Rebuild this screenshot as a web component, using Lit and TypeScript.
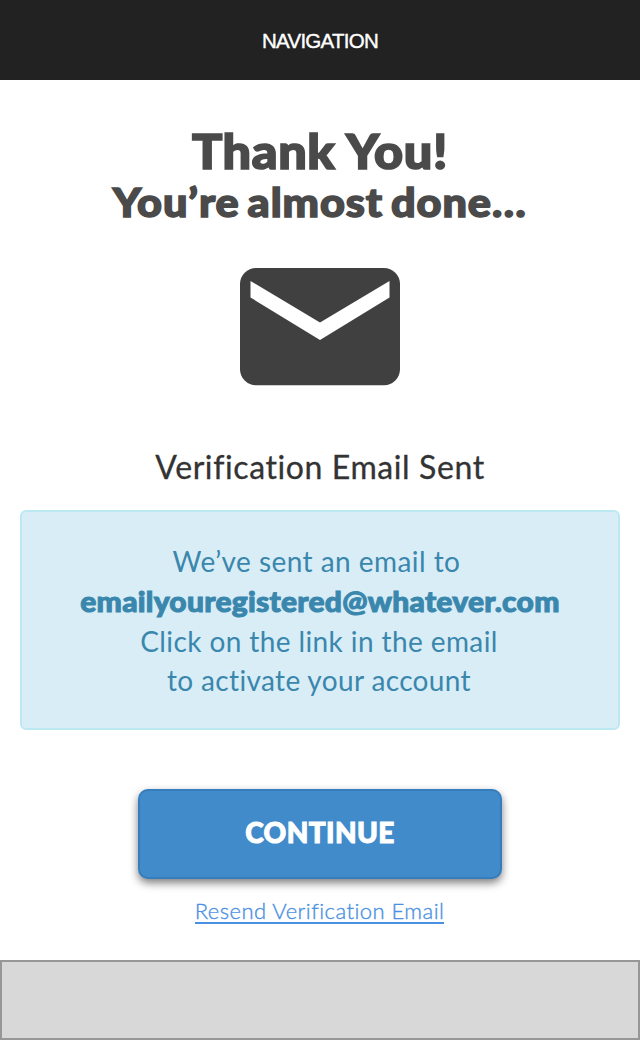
import { LitElement, html, css } from "lit";
import { customElement } from "lit/decorators.js";

@customElement("app-root")
export class AppRoot extends LitElement {
  static styles = css`
    :host {
      display: flex;
      flex-direction: column;
      align-items: center;
      height: 1040px;
      background: #fff;
      font-family: Lato, "Open Sans", sans-serif;
      font-variant-ligatures: none;
      white-space: nowrap;
    }
    .nav {
      box-sizing: border-box;
      align-self: stretch;
      height: 80px;
      background: #222;
      color: #fff;
      text-align: center;
      font: 20.5px/82px "Liberation Sans", Arial, sans-serif;
      letter-spacing: -0.75px;
      -webkit-text-stroke: 0.4px;
    }
    h1, h2, p { margin: 0; font-weight: inherit; }
    .title {
      margin-top: 42px;
      font-size: 48px;
      line-height: 57px;
      font-weight: 900;
      letter-spacing: 0.6px;
      -webkit-text-stroke: 1.7px;
      transform: scaleX(1.05);
      color: #4a4a4a;
    }
    .subtitle {
      font-size: 40px;
      line-height: 46px;
      font-weight: 900;
      letter-spacing: 0.85px;
      word-spacing: -3px;
      -webkit-text-stroke: 1.5px;
      transform: scaleX(1.08);
      color: #4a4a4a;
    }
    .envelope {
      display: block;
      margin-top: 43px;
      width: 160px;
      height: 118px;
    }
    .heading {
      margin-top: 61px;
      font-size: 32px;
      line-height: 40px;
      letter-spacing: 0.6px;
      -webkit-text-stroke: 0.3px;
      color: #333;
    }
    .notice {
      box-sizing: border-box;
      width: 600px;
      height: 220px;
      margin-top: 23px;
      padding-top: 29px;
      border: 2px solid #bce8f1;
      border-radius: 6px;
      background: #d9edf7;
      color: #3a87ad;
      text-align: center;
      font-size: 28px;
      line-height: 40px;
    }
    .sent { padding-right: 7px; letter-spacing: 0.45px; }
    .address {
      font-weight: 900;
      letter-spacing: 0.25px;
      -webkit-text-stroke: 1px;
      transform: scaleX(1.07);
    }
    .click { padding-right: 2px; letter-spacing: 0.4px; }
    .last { line-height: 38px; padding-right: 2px; letter-spacing: 0.35px; }
    .continue {
      box-sizing: border-box;
      width: 364px;
      height: 90px;
      margin: 59px 0 0;
      padding: 0 0 4px;
      border: 2px solid #357ebd;
      border-radius: 10px;
      background: #428bca;
      box-shadow: 0 4px 8px rgba(0, 0, 0, 0.5);
      color: #fff;
      font: 900 28px/80px Lato, "Open Sans", sans-serif;
      letter-spacing: 0.4px;
      -webkit-text-stroke: 1px;
    }
    .resend {
      margin-top: 20px;
      margin-right: 1px;
      border-bottom: 2px solid #4a90e2;
      color: #4a90e2;
      font-size: 22px;
      line-height: 23px;
      font-weight: 300;
      letter-spacing: 0.47px;
      -webkit-text-stroke: 0.35px;
      text-decoration: none;
    }
    .footer {
      box-sizing: border-box;
      align-self: stretch;
      height: 80px;
      margin-top: auto;
      border: 2px solid #979797;
      background: #d8d8d8;
    }
  `;

  render() {
    return html`
      <header class="nav"><span>NAVIGATION</span></header>
      <h1 class="title">Thank You!</h1>
      <p class="subtitle">You’re almost done…</p>
      <svg class="envelope" viewBox="0 0 160 118" aria-hidden="true">
        <rect width="160" height="117.3" rx="16" fill="#404040" />
        <path d="M10.5 13 80 54.5 149.5 13V29.5L80 72 10.5 29.5Z" fill="#fff" />
      </svg>
      <h2 class="heading">Verification Email Sent</h2>
      <section class="notice">
        <p class="sent"><span>We’ve sent an email to</span></p>
        <p class="address"><span>emailyouregistered@whatever.com</span></p>
        <p class="click"><span>Click on the link in the email</span></p>
        <p class="last"><span>to activate your account</span></p>
      </section>
      <button class="continue">CONTINUE</button>
      <a class="resend" href="#">Resend Verification Email</a>
      <footer class="footer"></footer>
    `;
  }
}
